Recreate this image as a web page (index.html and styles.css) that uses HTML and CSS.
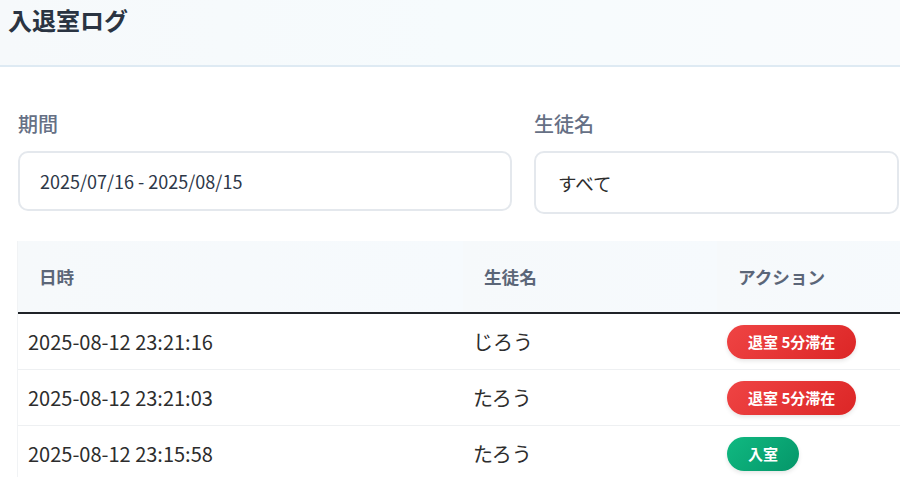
FILE: index.html
```html
<!DOCTYPE html>
<html lang="ja">
<head>
  <meta charset="UTF-8">
  <title>入退室ログ</title>
  <link rel="stylesheet" href="styles.css">
</head>
<body>

  <header class="page-header">
    <h1>入退室ログ</h1>
  </header>

  <main class="content">
    <div class="filters">
      <div class="field">
        <label>期間</label>
        <div class="input date-range">2025/07/16 - 2025/08/15</div>
      </div>
      <div class="field">
        <label>生徒名</label>
        <div class="input select">すべて</div>
      </div>
    </div>

    <table class="log-table">
      <colgroup>
        <col class="col-date">
        <col class="col-name">
        <col class="col-action">
      </colgroup>
      <thead>
        <tr>
          <th>日時</th>
          <th>生徒名</th>
          <th>アクション</th>
        </tr>
      </thead>
      <tbody>
        <tr>
          <td>2025-08-12 23:21:16</td>
          <td>じろう</td>
          <td><span class="badge exit">退室 5分滞在</span></td>
        </tr>
        <tr>
          <td>2025-08-12 23:21:03</td>
          <td>たろう</td>
          <td><span class="badge exit">退室 5分滞在</span></td>
        </tr>
        <tr>
          <td>2025-08-12 23:15:58</td>
          <td>たろう</td>
          <td><span class="badge enter">入室</span></td>
        </tr>
      </tbody>
    </table>
  </main>

</body>
</html>
```

FILE: styles.css
```css
body {
  margin: 0;
  overflow: hidden;
  background: #ffffff;
  font-family: "Noto Sans CJK JP", "Noto Sans", sans-serif;
  color: #2d3748;
}

.page-header {
  height: 67px;
  padding: 2px 8px 0;
  box-sizing: border-box;
  background: linear-gradient(90deg, #f6f9fb, #f6fbfd 50%, #f9fbfd);
  border-bottom: 2px solid #deeaf3;
}

.page-header h1 {
  margin: 0;
  font-size: 24px;
  font-weight: 700;
  line-height: 36px;
  color: #2a3442;
}

.content {
  padding: 43px 1px 0 18px;
}

.filters {
  display: grid;
  grid-template-columns: 494px 1fr;
  gap: 22px;
}

.field label {
  display: block;
  font-size: 20px;
  font-weight: 500;
  color: #667085;
  line-height: 28px;
  margin-bottom: 13px;
}

.input {
  box-sizing: border-box;
  border: 2px solid #e4e8ed;
  border-radius: 10px;
  background: #ffffff;
  display: flex;
  align-items: center;
}

.date-range {
  height: 60px;
  padding: 0 20px;
  font-size: 18px;
  color: #2d3748;
}

.select {
  height: 63px;
  padding: 0 22px;
  font-size: 18.5px;
  color: #2d2d2d;
}

.log-table {
  margin-top: 27px;
  width: 900px;
  border-collapse: collapse;
  table-layout: fixed;
  box-shadow: -1px 0 0 #f1f3f5;
}

.col-date { width: 445px; }
.col-name { width: 254px; }
.col-action { width: 201px; }

.log-table th {
  text-align: left;
  height: 71px;
  padding: 0 21px;
  font-size: 17.6px;
  font-weight: 700;
  color: #5b6678;
  background: linear-gradient(90deg, #f6f9fb, #f6fafd);
  border-bottom: 2px solid #1f2328;
}

.log-table td {
  height: 55px;
  padding: 0 10px;
  font-size: 20px;
  color: #2d2d2d;
  border-bottom: 1px solid #eef0f2;
}

.badge {
  display: inline-block;
  height: 34px;
  line-height: 34px;
  padding: 0 21px;
  border-radius: 17px;
  font-size: 15px;
  font-weight: 700;
  color: #ffffff;
  box-shadow: 0 2px 4px rgba(0, 0, 0, 0.1);
}

.badge.exit {
  background: linear-gradient(135deg, #ef4444, #dc2626);
}

.badge.enter {
  background: linear-gradient(135deg, #10b981, #059669);
}
```
